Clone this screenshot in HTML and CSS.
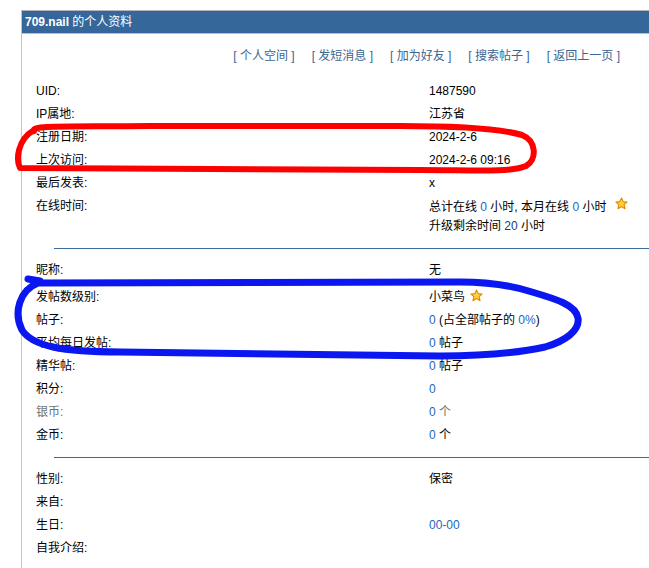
FILE: index.html
```html
<!DOCTYPE html>
<html lang="zh-CN">
<head>
<meta charset="utf-8">
<title>709.nail 的个人资料</title>
<link rel="stylesheet" href="styles.css">
</head>
<body>
<div class="wrap">
  <div class="hd"><b>709.nail</b> 的个人资料</div>
  <div class="links">
    <a href="#">[ 个人空间 ]</a>
    <a href="#">[ 发短消息 ]</a>
    <a href="#">[ 加为好友 ]</a>
    <a href="#">[ 搜索帖子 ]</a>
    <a href="#">[ 返回上一页 ]</a>
  </div>

  <div class="row"><div class="lbl">UID:</div><div class="val">1487590</div></div>
  <div class="row"><div class="lbl">IP属地:</div><div class="val">江苏省</div></div>
  <div class="row"><div class="lbl">注册日期:</div><div class="val">2024-2-6</div></div>
  <div class="row"><div class="lbl">上次访问:</div><div class="val">2024-2-6 09:16</div></div>
  <div class="row"><div class="lbl">最后发表:</div><div class="val">x</div></div>
  <div class="row"><div class="lbl">在线时间:</div><div class="val">总计在线 <em>0</em> 小时, 本月在线 <em>0</em> 小时<svg class="star star-wide" viewBox="0 0 14 14"><path d="M7 1 L8.8 5 L13 5.4 L9.8 8.2 L10.8 12.6 L7 10.3 L3.2 12.6 L4.2 8.2 L1 5.4 L5.2 5 Z" fill="#ffd23c" stroke="#e58a00" stroke-width="1.2" stroke-linejoin="round"/></svg><br>升级剩余时间 <em class="dk">20</em> 小时</div></div>

  <div class="sep"></div>

  <div class="row"><div class="lbl">昵称:</div><div class="val">无</div></div>
  <div class="row row-star"><div class="lbl">发帖数级别:</div><div class="val">小菜鸟<svg class="star" viewBox="0 0 14 14"><path d="M7 1 L8.8 5 L13 5.4 L9.8 8.2 L10.8 12.6 L7 10.3 L3.2 12.6 L4.2 8.2 L1 5.4 L5.2 5 Z" fill="#ffd23c" stroke="#e58a00" stroke-width="1.2" stroke-linejoin="round"/></svg></div></div>
  <div class="row"><div class="lbl">帖子:</div><div class="val"><em>0</em> (占全部帖子的 <em>0%</em>)</div></div>
  <div class="row"><div class="lbl">平均每日发帖:</div><div class="val"><em>0</em> 帖子</div></div>
  <div class="row"><div class="lbl">精华帖:</div><div class="val"><em>0</em> 帖子</div></div>
  <div class="row"><div class="lbl">积分:</div><div class="val"><em>0</em></div></div>
  <div class="row grey"><div class="lbl">银币:</div><div class="val"><em>0</em> 个</div></div>
  <div class="row"><div class="lbl">金币:</div><div class="val"><em>0</em> 个</div></div>

  <div class="sep"></div>

  <div class="row"><div class="lbl">性别:</div><div class="val">保密</div></div>
  <div class="row"><div class="lbl">来自:</div><div class="val"></div></div>
  <div class="row"><div class="lbl">生日:</div><div class="val"><em>00-00</em></div></div>
  <div class="row"><div class="lbl">自我介绍:</div><div class="val"></div></div>
</div>

<svg class="marks" viewBox="0 0 649 568" width="649" height="568">
  <path d="M34 131 C30 125 70 127 150 126 L400 126 C470 126 505 130 522 135 C537 141 537 160 526 166 C510 173 470 170 420 170 L20 168 C16 160 17 140 34 130" fill="none" stroke="#ff0000" stroke-width="6" stroke-linecap="round" stroke-linejoin="round"/>
  <path d="M28 279 L40 281 M38 283 C20 290 13 312 22 330 C32 346 62 352 120 352 C200 352 300 355 440 356 C485 356 522 352 545 347 C566 341 580 330 578 318 C576 305 556 299 532 292 C510 285 490 282 460 282 L38 283" fill="none" stroke="#0a17f0" stroke-width="7" stroke-linecap="round" stroke-linejoin="round"/>
</svg>
</body>
</html>
```

FILE: styles.css
```css
html, body {
  margin: 0;
  padding: 0;
  background: #fff;
}

body {
  font-family: "Liberation Sans", "Noto Sans CJK SC", sans-serif;
  font-size: 12px;
  color: #000;
  width: 649px;
  height: 568px;
  overflow: hidden;
  position: relative;
}

.wrap {
  margin: 10px 0 0 21px;
  border-left: 1px solid #c4c4c4;
  border-top: 1px solid #b4b4b4;
  height: 558px;
}

.hd {
  background: #35679a;
  color: #fff;
  height: 22px;
  line-height: 22px;
  padding-left: 3px;
  border-bottom: 1px solid #c0c0c0;
}

.hd b {
  font-weight: bold;
}

.links {
  display: flex;
  justify-content: flex-end;
  gap: 17px;
  padding: 15px 29px 16px 0;
  line-height: 15px;
}

.links a {
  color: #3a6592;
  text-decoration: none;
  white-space: pre;
}

.row {
  display: grid;
  grid-template-columns: 393px 1fr;
  padding: 2px 0 2px 14px;
  line-height: 19px;
}

.row-star {
  padding-top: 6px;
}

.val em {
  font-style: normal;
  color: #1d66c0;
}

.val em.dk {
  color: #17407a;
}

.grey {
  color: #707070;
}

.star {
  width: 13px;
  height: 13px;
  margin-left: 5px;
  vertical-align: -1px;
}

.star.star-wide {
  margin-left: 9px;
  vertical-align: 1px;
}

.sep {
  margin: 10px 0 10px 32px;
  border-top: 1px solid #3b6a9b;
}

.marks {
  position: absolute;
  left: 0;
  top: 0;
  pointer-events: none;
}
```
